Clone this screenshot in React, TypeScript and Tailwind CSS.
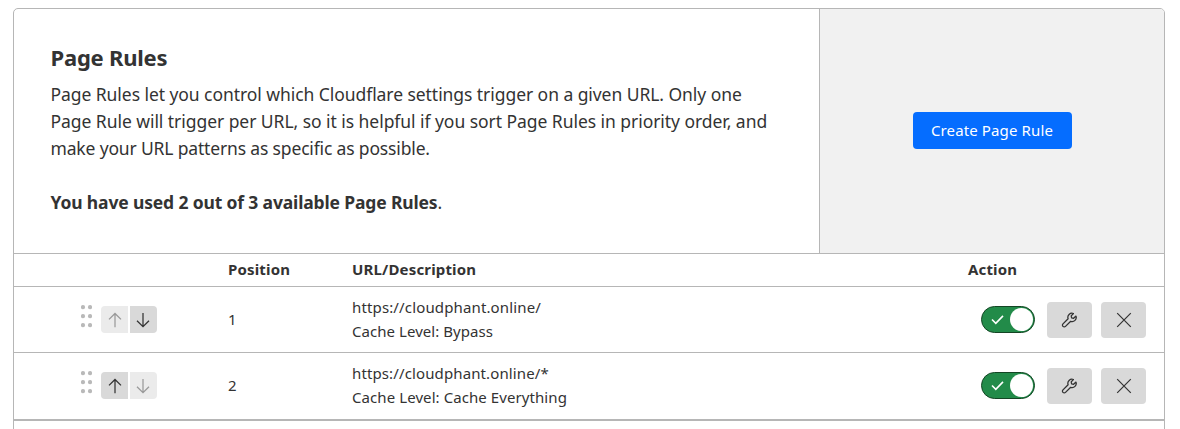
import React from "react";

const dots = [
  [2, 2], [9, 2],
  [2, 11], [9, 11],
  [2, 20], [9, 20],
];

function DragHandle() {
  return (
    <svg className="mt-px h-[24px] w-[11px] shrink-0 fill-[#b9b9b9]" viewBox="0 0 11 24">
      {dots.map(([x, y]) => (
        <circle key={`${x}-${y}`} cx={x} cy={y + 0.2} r="2.1" />
      ))}
    </svg>
  );
}

function Arrow({ down = false }: { down?: boolean }) {
  return (
    <svg className="size-[16px]" viewBox="0 0 16 16" fill="none" stroke="currentColor" strokeWidth="1.25">
      {down ? <path d="M7 1v14M1 8.8l6 5.9 6-5.9" /> : <path d="M8 15.2V1.5M2 7.4l6-5.9 6 5.9" />}
    </svg>
  );
}

function Wrench() {
  return (
    <svg className="size-[16px] -translate-x-[0.5px]" viewBox="0 0 16 16" fill="none" stroke="#333" strokeWidth="1.3" strokeLinecap="round" strokeLinejoin="round">
      <path d="M11.9 1.5A4.1 4.1 0 0 0 6.6 6.7L1.5 11.9a1.75 1.75 0 0 0 2.5 2.5l5.2-5.1a4.1 4.1 0 0 0 5.3-5.2L12.1 6.3l-2-.4-.4-2z" />
    </svg>
  );
}

function Toggle() {
  return (
    <button className="flex h-[27px] w-[54px] items-center justify-between rounded-full border border-[#144524] bg-[#228b49] pr-px pl-[9px]">
      <svg className="size-[13px]" viewBox="0 0 13 13" fill="none" stroke="white" strokeWidth="1.6">
        <path d="M1 6.5l3.8 3.8L12 2.9" />
      </svg>
      <span className="size-[23px] rounded-full bg-white" />
    </button>
  );
}

function Rule({ position, url, urlClass, level, levelClass, last }: {
  position: number; url: string; urlClass: string; level: string; levelClass: string; last?: boolean;
}) {
  const on = "bg-[#d9d9d9] text-[#333]";
  const off = "bg-[#ebebeb] text-[#999]";
  return (
    <div className={`flex border-[#b6b6b6] ${last ? "h-[68px] border-b-2" : "h-[66px] border-b"}`}>
      <div className="flex w-[214px] pt-[17px] pl-[67px]">
        <DragHandle />
        <div className="mt-[2px] ml-[9px] flex h-[27px] gap-[2px]">
          <button className={`flex w-[27px] items-center justify-center rounded-l-[4px] ${last ? on : off}`}><Arrow /></button>
          <button className={`flex w-[27px] items-center justify-center rounded-r-[4px] ${last ? off : on}`}><Arrow down /></button>
        </div>
      </div>
      <div className="w-[124px] pt-[20px] text-[15px] leading-[24px]">{position}</div>
      <div className="grow pt-[8px] text-[15px] leading-[24px] whitespace-nowrap">
        <div><span className={urlClass}>{url}</span></div>
        <div><span className={levelClass}>Cache Level: {level}</span></div>
      </div>
      <div className="flex h-[66px] items-center gap-[9px] pr-[18px]">
        <div className="mr-[3px] mb-px"><Toggle /></div>
        <button className="flex h-[36px] w-[45px] items-center justify-center rounded-[4px] bg-[#d9d9d9]"><Wrench /></button>
        <button className="flex h-[36px] w-[45px] items-center justify-center rounded-[4px] bg-[#d9d9d9]">
          <svg className="size-[16px]" viewBox="0 0 16 16" stroke="#333" strokeWidth="1.2"><path d="M1.2 1.2l13.6 13.6M14.8 1.2L1.2 14.8" /></svg>
        </button>
      </div>
    </div>
  );
}

export default function App() {
  return (
    <div className="h-[429px] overflow-hidden bg-white pt-[8px] pl-[13px] font-['Noto_Sans',sans-serif] text-[#333]">
      <div className="h-[460px] w-[1152px] overflow-hidden rounded-[5px] border border-[#b6b6b6]">
        <div className="flex h-[245px] border-b border-[#b6b6b6]">
          <div className="w-[805px] pt-[33px] pl-[36.5px] whitespace-nowrap">
            <h1 className="text-[22px] leading-[30px] font-bold"><span className="tracking-[-0.23px]">Page Rules</span></h1>
            <div className="mt-[9px] text-[17.5px] leading-[27px]">
              <div><span className="tracking-[-0.06px]">Page Rules let you control which Cloudflare settings trigger on a given URL. Only one</span></div>
              <div><span className="tracking-[-0.05px]">Page Rule will trigger per URL, so it is helpful if you sort Page Rules in priority order, and</span></div>
              <div><span className="tracking-[-0.16px]">make your URL patterns as specific as possible.</span></div>
              <div className="mt-[27px]"><span className="tracking-[-0.15px]"><b>You have used 2 out of 3 available Page Rules</b>.</span></div>
            </div>
          </div>
          <div className="flex grow items-center justify-center border-l border-[#b6b6b6] bg-[#f1f1f1] pb-[2px]">
            <button className="h-[37px] w-[159px] rounded-[4px] bg-[#056dff] text-[15px] tracking-[0.13px] whitespace-nowrap text-white">Create Page Rule</button>
          </div>
        </div>
        <div className="flex h-[33px] border-b border-[#b6b6b6] pl-[214px] text-[15px] leading-[30px] font-bold tracking-[0.16px] whitespace-nowrap">
          <div className="w-[124px]">Position</div>
          <div className="w-[616px]">URL/Description</div>
          <div>Action</div>
        </div>
        <Rule position={1} url="https://cloudphant.online/" urlClass="tracking-[0.14px]" level="Bypass" levelClass="tracking-[0.05px]" />
        <Rule position={2} url="https://cloudphant.online/*" urlClass="tracking-[0.12px]" level="Cache Everything" levelClass="tracking-[0.08px]" last />
      </div>
    </div>
  );
}
